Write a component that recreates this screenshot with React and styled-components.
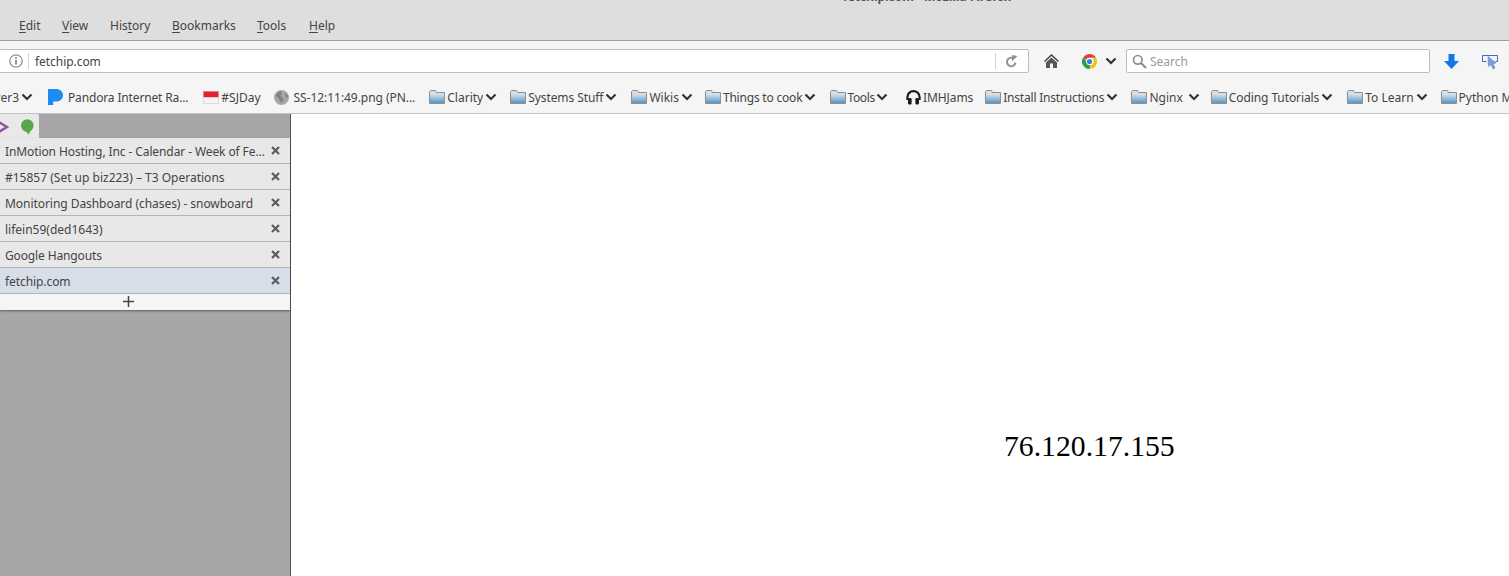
import React from 'react';
import styled, { createGlobalStyle } from 'styled-components';

const GlobalStyle = createGlobalStyle`
    html, body {
        margin: 0;
        padding: 0;
        height: 100%;
        overflow: hidden;
        background: #fff;
    }
    body {
        font-family: "Noto Sans", "Open Sans", sans-serif;
        font-size: 12px;
        color: #444;
    }
`

/** window chrome */
const Window = styled.div`
    width: 1509px;
    height: 576px;
    display: flex;
    flex-direction: column;
    overflow: hidden;
    position: relative;
`
const WindowTitle = styled.div`
    position: absolute;
    left: 843px;
    top: -12px;
    font-weight: 700;
    color: #555;
    white-space: nowrap;
`
const MenuBar = styled.div`
    flex: none;
    height: 41px;
    box-sizing: border-box;
    padding: 17px 0 0 19px;
    display: flex;
    background: #dedede;
    border-bottom: 1px solid #9c9c9c;
`
const MenuItem = styled.span`
    line-height: 18px;
    width: ${props => props.$width}px;
    u { text-underline-offset: 2px; }
`
const NavBar = styled.div`
    flex: none;
    height: 43px;
    box-sizing: border-box;
    padding: 8px 0 0 0;
    display: flex;
    align-items: flex-start;
    background: #f5f5f5;
`
const Field = styled.div`
    height: 24px;
    box-sizing: border-box;
    display: flex;
    align-items: center;
    background: #fff;
    border: 1px solid #bdbdbd;
    border-radius: 2px;
`
const UrlField = styled(Field)`
    width: 1034px;
    margin-left: -5px;
    padding-left: 13px;
`
const UrlText = styled.span`
    flex: 1;
    margin-left: 5px;
    padding-left: 6px;
    border-left: 1px solid #d0d0d0;
    height: 16px;
    line-height: 17px;
    letter-spacing: -0.05px;
`
const ReloadBox = styled.span`
    width: 33px;
    height: 16px;
    box-sizing: border-box;
    padding-right: 2px;
    display: flex;
    align-items: center;
    justify-content: center;
    border-left: 1px solid #d0d0d0;
`
const NavIcon = styled.span`
    display: flex;
    height: 24px;
    align-items: center;
    margin-left: ${props => props.$left}px;
`
const SearchField = styled(Field)`
    width: 304px;
    margin-left: 9px;
    padding-left: 5px;
    gap: 3px;
    color: #9a9a9a;
`

/** bookmarks */
const BookmarkBar = styled.div`
    flex: none;
    height: 30px;
    box-sizing: border-box;
    display: flex;
    align-items: center;
    padding-bottom: 3px;
    margin-left: -42px;
    width: 1620px;
    background: #f5f5f5;
    border-bottom: 1px solid #c4c4c4;
    gap: 13px;
    white-space: nowrap;
`
const Bookmark = styled.span`
    display: flex;
    align-items: center;
    gap: ${props => props.$gap}px;
    margin-left: ${props => props.$shift}px;
    flex: none;
`
const Label = styled.span`
    display: block;
    white-space: pre;
    letter-spacing: ${props => props.$spacing}px;
`

/** page below the toolbars */
const Body = styled.div`
    flex: 1;
    display: flex;
    min-height: 0;
`
const Sidebar = styled.div`
    width: 291px;
    flex: none;
    box-sizing: border-box;
    background: #a6a6a6;
    border-right: 1px solid #555;
`
const SideTools = styled.div`
    width: 39px;
    height: 24px;
    box-sizing: border-box;
    display: flex;
    align-items: center;
    padding-top: 1px;
    background: #e9e9e9;
    border-top-right-radius: 2px;
`
const TabList = styled.div`
    box-shadow: 0 1px 2px rgba(0, 0, 0, 0.45);
`
const Tab = styled.div`
    height: 26px;
    box-sizing: border-box;
    display: flex;
    align-items: center;
    padding: 0 10px 0 5px;
    background: ${props => props.$active ? '#d7deea' : '#e8e8e8'};
    border-bottom: 1px solid #b4b4b4;
    white-space: nowrap;
`
const TabTitle = styled.span`
    flex: 1;
    margin-top: 1px;
    letter-spacing: ${props => props.$spacing}px;
`
const CloseMark = styled.svg`
    width: 9px;
    height: 9px;
    display: block;
`
const NewTab = styled.div`
    height: 16px;
    box-sizing: border-box;
    padding: 0 34px 1px 0;
    display: flex;
    justify-content: center;
    align-items: center;
    background: #f5f5f5;
`
const Content = styled.main`
    flex: 1;
    background: #fff;
    box-sizing: border-box;
    padding: 315px 0 0 713px;
    font-family: "Liberation Serif", "Times New Roman", serif;
    font-size: 29.7px;
    line-height: 34px;
    color: #000;
`

/** icons */
const Chevron = () => (
    <svg width="12" height="8" viewBox="0 0 12 8">
        <path d="M1.5 1.5 6 6l4.5-4.5" fill="none" stroke="#333" strokeWidth="2.2" />
    </svg>
)
const Folder = () => (
    <svg width="16" height="14" viewBox="0 0 16 14">
        <defs>
            <linearGradient id="folderFill" x1="0" y1="0" x2="0" y2="1">
                <stop offset="0" stopColor="#d4e3ef" />
                <stop offset="1" stopColor="#5c95c0" />
            </linearGradient>
        </defs>
        <path d="M.5 13.500V1.500l1-1h5l1 2h8v11z" fill="#dcdcdc" stroke="#8a8f94" />
        <rect x="1" y="4" width="14" height="9" fill="url(#folderFill)" />
    </svg>
)
const PandoraIcon = () => (
    <svg width="15" height="16" viewBox="0 0 15 16">
        <path d="M0 0h8.500A6.300 6.300 0 0 1 15 6.200c0 3.600-2.900 6.300-6.500 6.300H5.200V16H0z" fill="#1c8cf2" />
    </svg>
)
const FlagIcon = () => (
    <svg width="16" height="13" viewBox="0 0 16 13">
        <rect width="16" height="6.500" fill="#e3222e" />
        <rect y="6.500" width="16" height="6.500" fill="#f6f6f6" />
        <rect x=".5" y=".5" width="15" height="12" fill="none" stroke="#d0c8c8" strokeOpacity=".6" />
    </svg>
)
const GlobeIcon = () => (
    <svg width="15" height="15" viewBox="0 0 15 15">
        <circle cx="7.500" cy="7.500" r="7.500" fill="#a6a6a6" />
        <path d="M4 2 7 1.500l1 2-2 2.500 2.500 1 1 3-2 3L5.500 10 3.500 7 1.500 6zM10.500 3l3 2 .5 3-2-.5z" fill="#828282" />
    </svg>
)
const HeadphonesIcon = () => (
    <svg width="15" height="15" viewBox="0 0 15 15">
        <path d="M1.400 10V7.200a6.100 6.100 0 0 1 12.200 0V10" fill="none" stroke="#1c1c1c" strokeWidth="2.200" />
        <rect x="2" y="8" width="3.600" height="6.500" rx="1.200" fill="#1c1c1c" />
        <rect x="9.400" y="8" width="3.600" height="6.500" rx="1.200" fill="#1c1c1c" />
    </svg>
)
const InfoIcon = () => (
    <svg width="14" height="14" viewBox="0 0 14 14">
        <circle cx="7" cy="7" r="6.200" fill="none" stroke="#8f8f8f" strokeWidth="1.300" />
        <rect x="6.200" y="6" width="1.600" height="4.500" fill="#777" />
        <rect x="6.200" y="3.300" width="1.600" height="1.600" fill="#777" />
    </svg>
)
const ReloadIcon = () => (
    <svg width="13" height="13" viewBox="0 0 13 13">
        <path d="M10.500 7.500A4.300 4.300 0 1 1 8.500 3.300" fill="none" stroke="#8b969c" strokeWidth="2" />
        <path d="M7 0v6.500L12.500 1z" fill="#8b969c" />
    </svg>
)
const HomeIcon = () => (
    <svg width="15" height="14" viewBox="0 0 15 14">
        <path d="M7.500 0 15 7l-1 1-6.500-6L1 8 0 7z" fill="#444" />
        <path d="M7.500 3.500 13 8.500V14H9V9.500H6V14H2V8.500z" fill="#555" />
    </svg>
)
const ChromeIcon = () => (
    <svg width="15" height="15" viewBox="0 0 24 24">
        <path d="M12 0a12 12 0 0 1 10.400 6H12a6 6 0 0 0-5.700 4L2.500 4.700A12 12 0 0 1 12 0z" fill="#db4437" />
        <path d="M22.400 6A12 12 0 0 1 12 24l5.200-9a6 6 0 0 0-.7-9z" fill="#f4c20d" />
        <path d="M12 24A12 12 0 0 1 2.500 4.700l4.700 8.100A6 6 0 0 0 14 17.700z" fill="#2f9e44" />
        <circle cx="12" cy="12" r="5.500" fill="#fff" />
        <circle cx="12" cy="12" r="4.200" fill="#3f7fe0" />
    </svg>
)
const SearchIcon = () => (
    <svg width="15" height="15" viewBox="0 0 15 15">
        <circle cx="5.800" cy="5.800" r="4.300" fill="none" stroke="#8e8e8e" strokeWidth="1.700" />
        <path d="m9 9 5 5" stroke="#8e8e8e" strokeWidth="2.200" />
    </svg>
)
const DownloadIcon = () => (
    <svg width="15" height="15" viewBox="0 0 15 15">
        <path d="M4.500 0h6v7H15l-7.500 8L0 7h4.500z" fill="#0f78e6" />
    </svg>
)
const PickerIcon = () => (
    <svg width="17" height="17" viewBox="0 0 17 17">
        <path d="M4.500 8.500H.5v-6h15v6h-2" fill="none" stroke="#4a66c4" />
        <path d="M6 3.500 14 10l-3 .5 2 4.500-2 1-2-4.500-2.500 2z" fill="#7c9ede" stroke="#5f80c8" strokeWidth=".6" />
    </svg>
)
const PurpleArrow = () => (
    <svg width="11" height="14" viewBox="0 0 11 14" style={{ marginLeft: -2 }}>
        <path d="M0 1.500 9 7l-9 5.500" fill="none" stroke="#8a5aa0" strokeWidth="2.500" />
    </svg>
)
const HangoutsIcon = () => (
    <svg width="13" height="16" viewBox="0 0 13 16" style={{ marginLeft: 12 }}>
        <circle cx="6.300" cy="6.500" r="6.300" fill="#5aa74a" />
        <path d="M4.500 12 9.500 11.500 7.800 15.500z" fill="#5aa74a" />
    </svg>
)
const PlusIcon = () => (
    <svg width="11" height="11" viewBox="0 0 11 11">
        <path d="M5.500 0v11M0 5.500h11" stroke="#444" strokeWidth="1.500" />
    </svg>
)

const menus = [
    { before: '', key: 'E', after: 'dit', width: 43 },
    { before: '', key: 'V', after: 'iew', width: 48 },
    { before: 'His', key: 't', after: 'ory', width: 62 },
    { before: '', key: 'B', after: 'ookmarks', width: 85 },
    { before: '', key: 'T', after: 'ools', width: 52 },
    { before: '', key: 'H', after: 'elp', width: 40 },
];

const bookmarks = [
    { icon: <Folder />, label: 'Server3', chevron: true },
    { icon: <PandoraIcon />, label: 'Pandora Internet Ra...', gap: 5, shift: 2, spacing: -0.15 },
    { icon: <FlagIcon />, label: '#SJDay', shift: 2 },
    { icon: <GlobeIcon />, label: 'SS-12:11:49.png (PN...', gap: 5, spacing: -0.05 },
    { icon: <Folder />, label: 'Clarity', chevron: true, shift: 1 },
    { icon: <Folder />, label: 'Systems Stuff', chevron: true, spacing: -0.08 },
    { icon: <Folder />, label: 'Wikis', chevron: true, shift: 1 },
    { icon: <Folder />, label: 'Things to cook', chevron: true, shift: -1, spacing: -0.2 },
    { icon: <Folder />, label: 'Tools', chevron: true, gap: 1, shift: 1, spacing: -0.3 },
    { icon: <HeadphonesIcon />, label: 'IMHJams', shift: 5, spacing: -0.1 },
    { icon: <Folder />, label: 'Install Instructions', chevron: true, shift: -1, spacing: -0.2 },
    { icon: <Folder />, label: 'Nginx ', chevron: true },
    { icon: <Folder />, label: 'Coding Tutorials', chevron: true, shift: -2, spacing: -0.1 },
    { icon: <Folder />, label: 'To Learn', chevron: true, shift: 1 },
    { icon: <Folder />, label: 'Python Mo...', chevron: true },
];

const tabs = [
    { title: 'InMotion Hosting, Inc - Calendar - Week of Fe...', spacing: -0.1 },
    { title: '#15857 (Set up biz223) – T3 Operations', spacing: 0 },
    { title: 'Monitoring Dashboard (chases) - snowboard', spacing: -0.05 },
    { title: 'lifein59(ded1643)', spacing: 0 },
    { title: 'Google Hangouts', spacing: -0.13 },
    { title: 'fetchip.com', spacing: -0.08 },
];

const App = () => {
    return (
        <Window>
            <GlobalStyle />
            <MenuBar>
                {menus.map(m => (
                    <MenuItem key={m.key} $width={m.width}>
                        {m.before}<u>{m.key}</u>{m.after}
                    </MenuItem>
                ))}
            </MenuBar>
            <WindowTitle>fetchip.com - Mozilla Firefox</WindowTitle>
            <NavBar>
                <UrlField>
                    <InfoIcon />
                    <UrlText>fetchip.com</UrlText>
                    <ReloadBox><ReloadIcon /></ReloadBox>
                </UrlField>
                <NavIcon $left={15}><HomeIcon /></NavIcon>
                <NavIcon $left={23}><ChromeIcon /></NavIcon>
                <NavIcon $left={8}><Chevron /></NavIcon>
                <SearchField><SearchIcon />Search</SearchField>
                <NavIcon $left={14}><DownloadIcon /></NavIcon>
                <NavIcon $left={23}><PickerIcon /></NavIcon>
            </NavBar>
            <BookmarkBar>
                {bookmarks.map(b => (
                    <Bookmark key={b.label} $gap={b.gap ?? 2} $shift={b.shift ?? 0}>
                        {b.icon}
                        <Label $spacing={b.spacing ?? 0}>{b.label}</Label>
                        {b.chevron && <Chevron />}
                    </Bookmark>
                ))}
            </BookmarkBar>
            <Body>
                <Sidebar>
                    <SideTools>
                        <PurpleArrow />
                        <HangoutsIcon />
                    </SideTools>
                    <TabList>
                        {tabs.map((t, i) => (
                            <Tab key={t.title} $active={i === tabs.length - 1}>
                                <TabTitle $spacing={t.spacing}>{t.title}</TabTitle>
                                <CloseMark viewBox="0 0 9 9">
                                    <path d="M1 1l7 7M8 1 1 8" stroke="#5c5c5c" strokeWidth="2.200" />
                                </CloseMark>
                            </Tab>
                        ))}
                        <NewTab><PlusIcon /></NewTab>
                    </TabList>
                </Sidebar>
                <Content>76.120.17.155</Content>
            </Body>
        </Window>
    )
}

export default App;
